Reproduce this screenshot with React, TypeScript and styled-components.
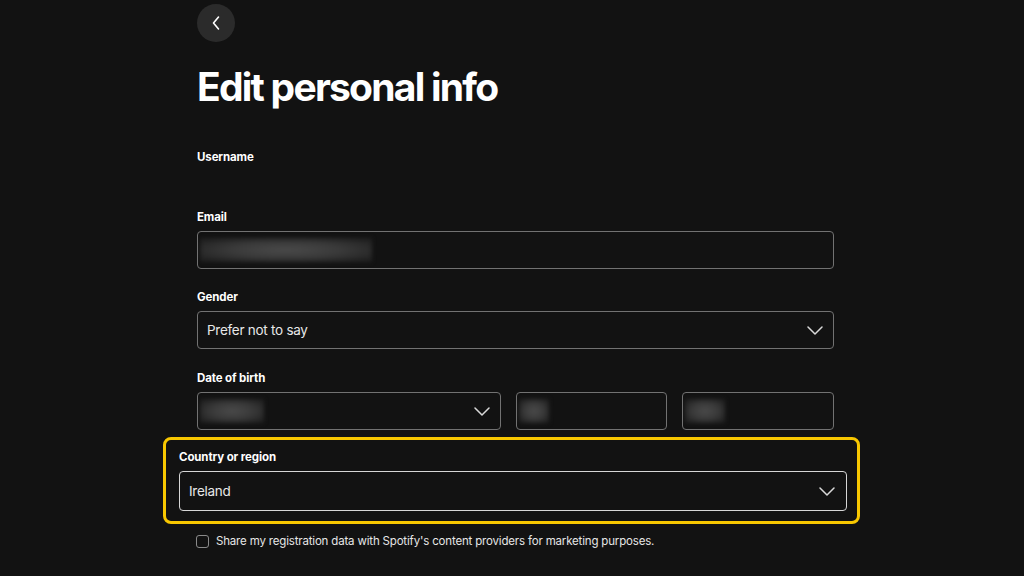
import React from "react";
import styled, { createGlobalStyle } from "styled-components";

const GlobalStyle = createGlobalStyle`
  html, body {
    margin: 0;
    padding: 0;
    background: #121212;
    color: #ffffff;
    font-family: Inter, "Noto Sans", "Liberation Sans", sans-serif;
  }
  * { box-sizing: border-box; }
`;

const Page = styled.div`
  width: 1024px;
  height: 576px;
  overflow: hidden;
  background: #121212;
`;

const Column = styled.main`
  width: 637px;
  margin-left: 197px;
  padding-top: 4px;
  display: flex;
  flex-direction: column;
`;

const BackButton = styled.button`
  width: 38px;
  height: 38px;
  border-radius: 50%;
  border: none;
  padding: 0;
  background: #2b2b2b;
  display: flex;
  align-items: center;
  justify-content: center;
  color: #ffffff;
  cursor: pointer;
`;

const Title = styled.h1`
  margin: 21px 0 0;
  font-size: 39px;
  line-height: 48px;
  font-weight: 700;
  letter-spacing: -0.045em;
  color: #ffffff;
`;

const Field = styled.div<{ $gap?: number }>`
  display: flex;
  flex-direction: column;
  gap: 6px;
  margin-top: ${(p) => p.$gap ?? 19}px;
`;

const Label = styled.label`
  padding-top: 1px;
  font-size: 11.5px;
  line-height: 16px;
  font-weight: 700;
  letter-spacing: -0.01em;
  color: #ffffff;
`;

const EmptyValue = styled.div`
  height: 37px;
`;

const Box = styled.div<{ $focus?: boolean }>`
  height: ${(p) => (p.$focus ? 40 : 38)}px;
  border: ${(p) => (p.$focus ? "1.5px solid #d6d6d6" : "1px solid #727272")};
  border-radius: 4px;
  background: #121212;
  display: flex;
  align-items: center;
  justify-content: space-between;
  padding: 0 ${(p) => (p.$focus ? 11 : 10)}px 0 9px;
  position: relative;
  overflow: hidden;
`;

const Value = styled.span`
  font-size: 13.5px;
  letter-spacing: -0.02em;
  color: #e8e8e8;
`;

const Blur = styled.span<{ $w: number }>`
  display: block;
  height: 24px;
  width: ${(p) => p.$w}px;
  margin-left: -7px;
  background: radial-gradient(ellipse at center, #4a4a4a 0%, #3a3a3a 45%, #262626 80%, #1c1c1c 100%);
  filter: blur(2px);
`;

const DateRow = styled.div`
  display: grid;
  grid-template-columns: 2fr 1fr 1fr;
  gap: 15px;
`;

const Highlight = styled.section`
  margin: 7px -26px 0 -34px;
  border: 3px solid #f8c700;
  border-radius: 8px;
  padding: 8px 10px 10px 13px;
  display: flex;
  flex-direction: column;
  gap: 6px;
`;

const CheckRow = styled.label`
  display: flex;
  align-items: center;
  gap: 7px;
  margin-top: 10px;
  font-size: 11.5px;
  letter-spacing: -0.015em;
  color: #e6e6e6;
`;

const Check = styled.span`
  width: 13px;
  height: 13px;
  border: 1px solid #8a8a8a;
  border-radius: 3px;
  margin-left: -1px;
`;

const Chevron = () => (
  <svg width="16" height="9" viewBox="0 0 16 9" fill="none">
    <path d="M1 1l7 7 7-7" stroke="#d9d9d9" strokeWidth="1.5" strokeLinecap="round" strokeLinejoin="round" />
  </svg>
);

const BackArrow = () => (
  <svg width="10" height="16" viewBox="0 0 10 16" fill="none">
    <path d="M7.5 2L2.5 8l5 6" stroke="#ffffff" strokeWidth="1.6" strokeLinecap="round" strokeLinejoin="round" />
  </svg>
);

export default function App() {
  return (
    <Page>
      <GlobalStyle />
      <Column>
        <BackButton aria-label="Back">
          <BackArrow />
        </BackButton>
        <Title>Edit personal info</Title>

        <Field $gap={37}>
          <Label>Username</Label>
          <EmptyValue />
        </Field>

        <Field $gap={0}>
          <Label>Email</Label>
          <Box>
            <Blur $w={172} />
          </Box>
        </Field>

        <Field>
          <Label>Gender</Label>
          <Box>
            <Value>Prefer not to say</Value>
            <Chevron />
          </Box>
        </Field>

        <Field $gap={20}>
          <Label>Date of birth</Label>
          <DateRow>
            <Box>
              <Blur $w={64} />
              <Chevron />
            </Box>
            <Box>
              <Blur $w={30} />
            </Box>
            <Box>
              <Blur $w={40} />
            </Box>
          </DateRow>
        </Field>

        <Highlight>
          <Label>Country or region</Label>
          <Box $focus>
            <Value>Ireland</Value>
            <Chevron />
          </Box>
        </Highlight>

        <CheckRow>
          <Check />
          Share my registration data with Spotify's content providers for marketing purposes.
        </CheckRow>
      </Column>
    </Page>
  );
}
